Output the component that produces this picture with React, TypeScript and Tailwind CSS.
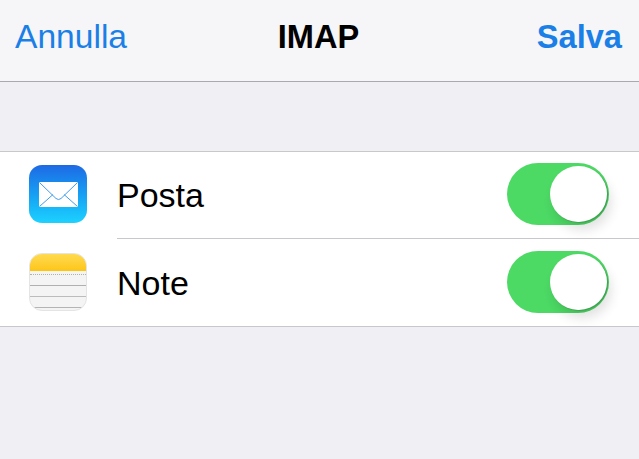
const FONT = { fontFamily: '"Liberation Sans", Arial, sans-serif' };

function MailIcon() {
  return (
    <div className="flex h-[58px] w-[58px] shrink-0 items-center justify-center rounded-[13px] bg-gradient-to-b from-[#1f69e4] to-[#1ed2ff]">
      <svg width="39" height="25" viewBox="0 0 39 25">
        <rect width="39" height="25" fill="#fff" rx="0.5" />
        <path d="M0.5 0.5 L17 16.5 Q19.5 18.6 22 16.5 L38.5 0.5" fill="none" stroke="#3f9ceb" strokeWidth="1" />
        <path d="M0.5 24.5 L14 12.5 M38.5 24.5 L25 12.5" fill="none" stroke="#3f9ceb" strokeWidth="1" />
      </svg>
    </div>
  );
}

function NotesIcon() {
  return (
    <div className="flex h-[58px] w-[58px] shrink-0 flex-col overflow-hidden rounded-[13px] border border-[#e4e4e4] bg-[#f4f4f4]">
      <div className="-mx-px -mt-px h-[18px] shrink-0 bg-gradient-to-b from-[#ffdc50] to-[#fdc50f]" />
      <div className="h-[4px] border-b border-dotted border-[#b5b0a0]" />
      <div className="h-[11px] border-b border-[#b0b0b0]" />
      <div className="h-[11px] border-b border-[#bcbcbc]" />
      <div className="h-[11px] border-b border-[#b4b4b4]" />
    </div>
  );
}

function Toggle() {
  return (
    <div className="relative h-[62px] w-[102px] shrink-0 rounded-full bg-[#4cd964]">
      <div className="absolute left-[43px] top-[3px] h-[56px] w-[57px] rounded-full bg-white shadow-[1px_1px_1px_#3f9f50,4px_8px_12px_rgba(0,0,0,0.12)]" />
    </div>
  );
}

export default function App() {
  return (
    <div className="h-[459px] w-[639px] overflow-hidden bg-[#efeff4]" style={FONT}>
      <header className="flex h-[82px] items-start justify-between border-b border-[#a9a9ae] bg-[#f6f6f8] px-[15px] pt-[17px] leading-[40px]">
        <span className="w-[150px] text-[33.6px] text-[#1a7fe6]">Annulla</span>
        <span className="pr-[2px] text-[32.6px] font-bold text-black">IMAP</span>
        <span className="w-[150px] pr-[2px] text-right text-[32.6px] font-bold text-[#1a7fe6]">Salva</span>
      </header>
      <section className="mt-[69px] border-y border-[#c8c7cc] bg-white">
        <div className="flex h-[86px] items-center pb-[2px] pl-[29px] pr-[30px]">
          <MailIcon />
          <span className="ml-[30px] mt-[3px] flex-1 text-[34px] text-black">Posta</span>
          <Toggle />
        </div>
        <div className="ml-[117px] h-px bg-[#c8c7cc]" />
        <div className="flex h-[87px] items-center pb-[1px] pl-[29px] pr-[30px]">
          <NotesIcon />
          <span className="ml-[30px] mt-[3px] flex-1 text-[34px] text-black">Note</span>
          <Toggle />
        </div>
      </section>
    </div>
  );
}
